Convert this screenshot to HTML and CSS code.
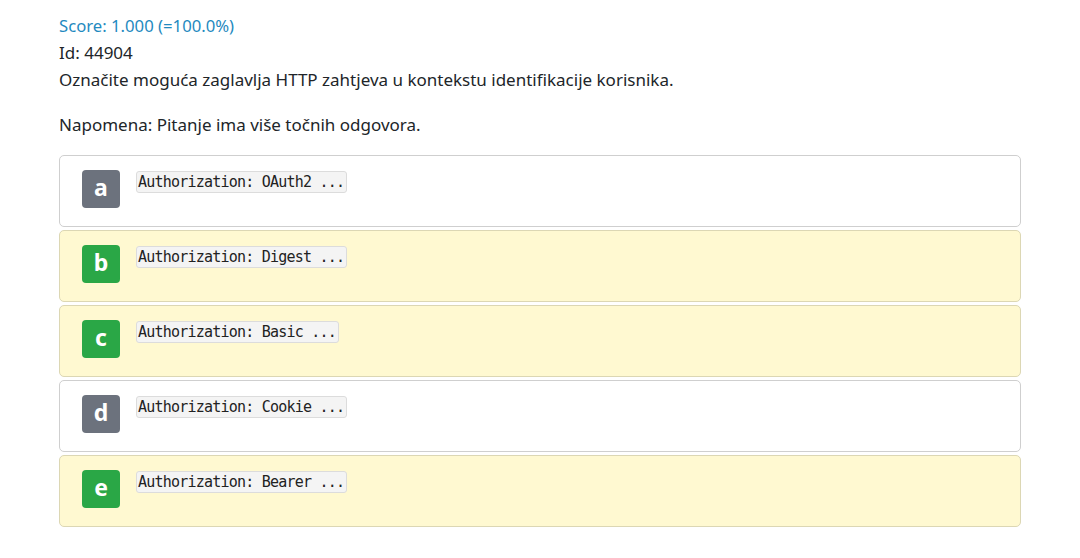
FILE: index.html
```html
<!DOCTYPE html>
<html>
<head>
<meta charset="utf-8">
<link rel="stylesheet" href="styles.css">
</head>
<body>
<div class="page">
  <div class="score">Score: 1.000 (=100.0%)</div>
  <div class="line">Id: 44904</div>
  <div class="line">Označite moguća zaglavlja HTTP zahtjeva u kontekstu identifikacije korisnika.</div>
  <p class="note">Napomena: Pitanje ima više točnih odgovora.</p>
  <div class="answers">
    <div class="answer">
      <span class="badge gray">a</span>
      <code class="code">Authorization: OAuth2 ...</code>
    </div>
    <div class="answer correct">
      <span class="badge green">b</span>
      <code class="code">Authorization: Digest ...</code>
    </div>
    <div class="answer correct">
      <span class="badge green">c</span>
      <code class="code">Authorization: Basic ...</code>
    </div>
    <div class="answer">
      <span class="badge gray">d</span>
      <code class="code">Authorization: Cookie ...</code>
    </div>
    <div class="answer correct">
      <span class="badge green">e</span>
      <code class="code">Authorization: Bearer ...</code>
    </div>
  </div>
</div>
</body>
</html>
```
FILE: styles.css
```css
html, body {
  margin: 0;
  padding: 0;
  background: #ffffff;
}
body {
  font-family: "Noto Sans", "Open Sans", sans-serif;
  font-size: 17px;
  color: #212529;
}
.page {
  padding: 12px 59px 0 59px;
}
.score {
  color: #1f8ac0;
  font-size: 16.7px;
  line-height: 27px;
}
.line {
  line-height: 27px;
}
.note {
  margin: 18px 0 0 0;
  line-height: 27px;
}
.answers {
  margin-top: 17px;
  display: flex;
  flex-direction: column;
  gap: 3px;
}
.answer {
  display: flex;
  align-items: flex-start;
  gap: 16px;
  height: 72px;
  box-sizing: border-box;
  padding: 14px 22px;
  border: 1px solid #cfcfcf;
  border-radius: 5px;
  background: #ffffff;
}
.answer.correct {
  background: #fff9d1;
  border-color: #dcd7b4;
}
.badge {
  width: 38px;
  height: 38px;
  border-radius: 4px;
  display: flex;
  align-items: center;
  justify-content: center;
  color: #ffffff;
  font-weight: 700;
  font-size: 23px;
  line-height: 1;
  padding-bottom: 3px;
  box-sizing: border-box;
}
.badge.gray {
  background: #6c727d;
}
.badge.green {
  background: #2aa746;
}
.code {
  margin-top: 1px;
  font-family: "DejaVu Sans Mono", "Liberation Mono", monospace;
  font-size: 15px;
  letter-spacing: -0.78px;
  line-height: 20px;
  padding: 0 2px 0 1px;
  background: #f4f4f4;
  border: 1px solid #dcdcdc;
  border-radius: 3px;
  color: #222222;
}
```
